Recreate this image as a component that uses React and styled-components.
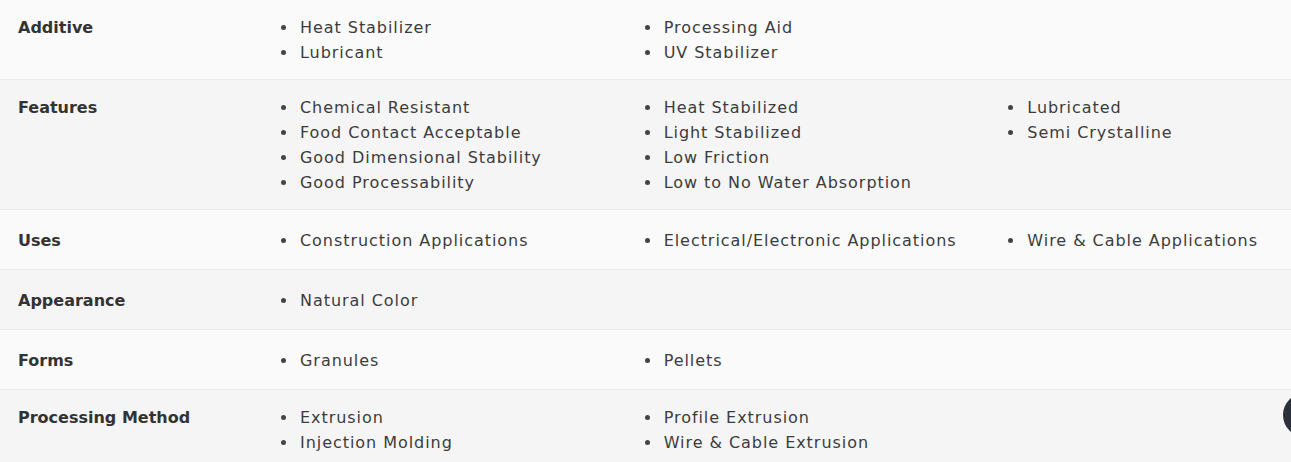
import React from "react";
import styled, { createGlobalStyle } from "styled-components";

const Global = createGlobalStyle`
  html, body { margin: 0; padding: 0; background: #fafafa; overflow: hidden; }
  body { font-family: "DejaVu Sans", "Noto Sans", sans-serif; }
`;

const Table = styled.div`
  width: 1291px;
  overflow: hidden;
  position: relative;
  margin-top: -1px;
`;

const Row = styled.div`
  display: grid;
  grid-template-columns: 281px 1fr;
  align-items: start;
  align-content: center;
  min-height: 60px;
  background: ${(p) => (p.$alt ? "#f5f5f5" : "#fafafa")};
  border-top: 1px solid #ebebeb;
  padding: 15px 0 14px 18px;
  box-sizing: border-box;
`;

const Label = styled.div`
  font-weight: 700;
  font-size: 16px;
  line-height: 25px;
  color: #333;
`;

const List = styled.ul`
  margin: 0 0 0 -18px;
  padding: 0;
  list-style: none;
  width: 1091px;
  column-count: 3;
  column-gap: 0;
`;

const Item = styled.li`
  display: flex;
  align-items: center;
  font-size: 16px;
  line-height: 25px;
  letter-spacing: 0.95px;
  color: #3c3c3c;
  white-space: nowrap;
  break-inside: avoid;
  &::before {
    content: "";
    width: 5px;
    height: 5px;
    border-radius: 50%;
    background: #444;
    margin-right: 14px;
    flex: none;
  }
`;

const Fab = styled.div`
  position: absolute;
  right: -36px;
  top: 394px;
  width: 44px;
  height: 44px;
  border-radius: 50%;
  background: #2b303a;
`;

const data = [
  ["Additive", ["Heat Stabilizer", "Lubricant", "Processing Aid", "UV Stabilizer"]],
  [
    "Features",
    [
      "Chemical Resistant",
      "Food Contact Acceptable",
      "Good Dimensional Stability",
      "Good Processability",
      "Heat Stabilized",
      "Light Stabilized",
      "Low Friction",
      "Low to No Water Absorption",
      "Lubricated",
      "Semi Crystalline",
    ],
  ],
  ["Uses", ["Construction Applications", "Electrical/Electronic Applications", "Wire & Cable Applications"]],
  ["Appearance", ["Natural Color"]],
  ["Forms", ["Granules", "Pellets"]],
  ["Processing Method", ["Extrusion", "Injection Molding", "Profile Extrusion", "Wire & Cable Extrusion"]],
];

export default function App() {
  return (
    <>
      <Global />
      <Table>
        {data.map(([label, items], i) => (
          <Row key={label} $alt={i % 2 === 1}>
            <Label>{label}</Label>
            <List>
              {items.map((it) => (
                <Item key={it}>{it}</Item>
              ))}
            </List>
          </Row>
        ))}
        <Fab />
      </Table>
    </>
  );
}
